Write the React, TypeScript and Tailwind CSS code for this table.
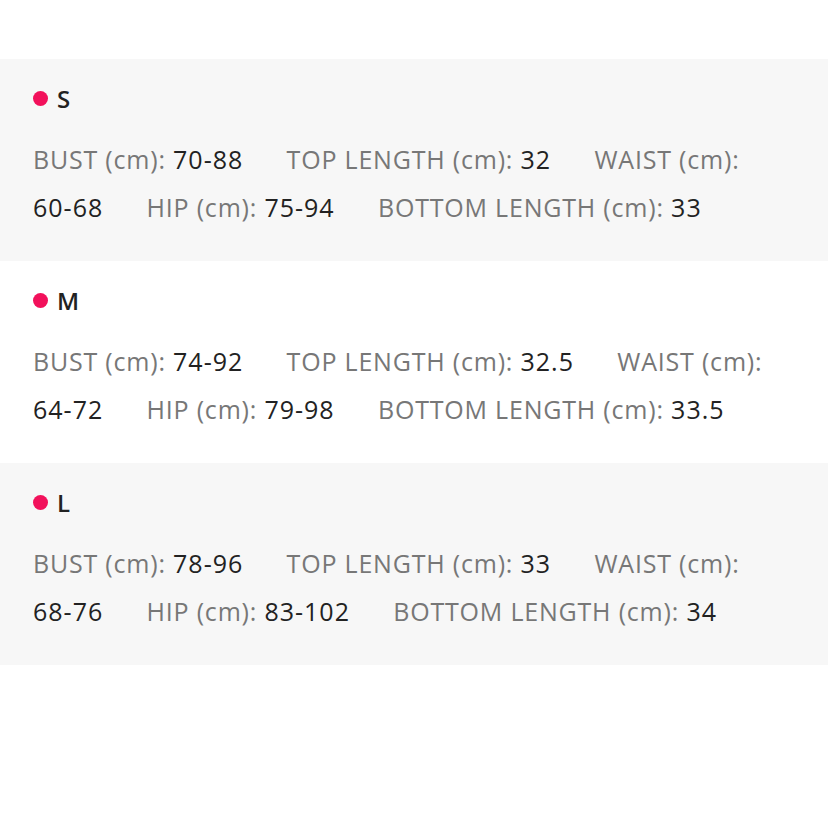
import React from "react";

type Item = { label: string; value: string };
type Size = { name: string; items: Item[]; gray: boolean };

const sizes: Size[] = [
  {
    name: "S",
    gray: true,
    items: [
      { label: "BUST (cm):", value: "70-88" },
      { label: "TOP LENGTH (cm):", value: "32" },
      { label: "WAIST (cm):", value: "60-68" },
      { label: "HIP (cm):", value: "75-94" },
      { label: "BOTTOM LENGTH (cm):", value: "33" },
    ],
  },
  {
    name: "M",
    gray: false,
    items: [
      { label: "BUST (cm):", value: "74-92" },
      { label: "TOP LENGTH (cm):", value: "32.5" },
      { label: "WAIST (cm):", value: "64-72" },
      { label: "HIP (cm):", value: "79-98" },
      { label: "BOTTOM LENGTH (cm):", value: "33.5" },
    ],
  },
  {
    name: "L",
    gray: true,
    items: [
      { label: "BUST (cm):", value: "78-96" },
      { label: "TOP LENGTH (cm):", value: "33" },
      { label: "WAIST (cm):", value: "68-76" },
      { label: "HIP (cm):", value: "83-102" },
      { label: "BOTTOM LENGTH (cm):", value: "34" },
    ],
  },
];

export default function App() {
  return (
    <div
      className="w-[828px] h-[828px] bg-white pt-[59px]"
      style={{ fontFamily: '"Open Sans", "Noto Sans", sans-serif' }}
    >
      {sizes.map((s) => (
        <div
          key={s.name}
          className={`${s.gray ? "bg-[#f7f7f7]" : "bg-white"} h-[202px] pl-[33px] pr-[20px] pt-[24px]`}
        >
          <div className="flex items-center h-[32px]">
            <span className="w-[15px] h-[15px] rounded-full bg-[#f2115b] mr-[9px] mt-[-2px]" />
            <span className="text-[24px] font-semibold text-[#222] tracking-[0.5px]">{s.name}</span>
          </div>
          <p className="mt-[20px] text-[25px] leading-[48px] tracking-[0.8px]">
            {s.items.map((it, i) => (
              <React.Fragment key={i}>
                <span className="mr-[36px]">
                  <span className="text-[#777]">{it.label}</span>{" "}
                  <span className="text-[#222] whitespace-nowrap tracking-[1px]">{it.value}</span>
                </span>{" "}
              </React.Fragment>
            ))}
          </p>
        </div>
      ))}
    </div>
  );
}
